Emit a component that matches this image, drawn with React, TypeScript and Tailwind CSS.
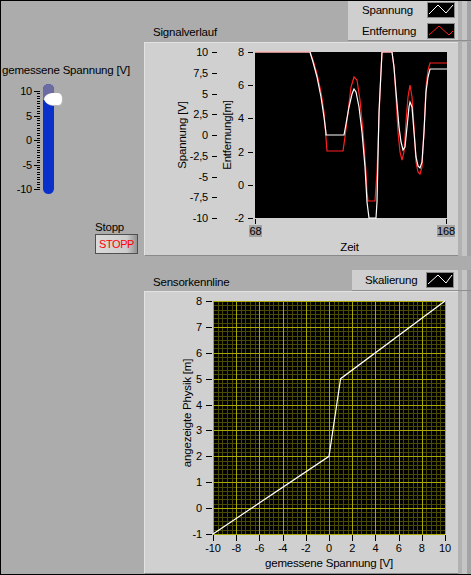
import React from 'react';

// Signalverlauf traces, local px inside the 192x166 plot
const whiteTrace = [
  [0, 0], [55, 0], [58, 10], [62, 25], [66, 45], [69, 65], [71, 81], [71, 83], [89, 83], [91, 72], [94, 55],
  [97, 42], [99, 37], [101, 40], [104, 55], [107, 80], [110, 115], [112, 150], [114, 166], [121, 166], [122, 150],
  [124, 60], [127, 0], [137, 0], [139, 15], [141, 40], [144, 75], [146, 90], [148, 98], [150, 95], [152, 75],
  [154, 55], [155, 50], [157, 55], [159, 80], [161, 105], [163, 114], [165, 116], [167, 110], [169, 80], [171, 40],
  [173, 25], [175, 17], [192, 17],
];
const redTrace = [
  [0, 0], [55, 0], [58, 8], [62, 22], [66, 40], [69, 60], [72, 99], [88, 99], [90, 85], [93, 60], [96, 35],
  [99, 25], [102, 28], [105, 48], [108, 80], [111, 120], [112, 140], [113, 149], [120, 149], [122, 120], [125, 40],
  [127, 0], [137, 0], [139, 15], [141, 45], [143, 80], [145, 100], [147, 108], [149, 100], [151, 70], [153, 45],
  [155, 33], [157, 45], [159, 75], [161, 110], [163, 120], [165, 122], [167, 115], [169, 80], [171, 35], [173, 18],
  [175, 11], [192, 11],
];
const kennlinie = [[-10, -1], [0, 2], [1, 5], [10, 8]];

const pts = (a: number[][]) => a.map((p) => p.join(',')).join(' ');

const Bevel = () => (
  <>
    <div className="w-[4px] bg-[#b1b1b1]" />
    <div className="w-[5px] bg-[#c5c5c5]" />
    <div className="w-[4px] bg-[#a3a3a3]" />
  </>
);

const Swatch = ({ line, color }: { line: string; color: string }) => (
  <svg width="28" height="16" className="block shrink-0">
    <rect x="0.5" y="0.5" width="27" height="15" fill="#000" stroke="#8a8a8a" />
    <polyline points={line} fill="none" stroke={color} strokeWidth="1" />
  </svg>
);

const Slider = () => {
  const yOf = (v: number) => 91 + (10 - v) * 4.9;
  const minor = Array.from({ length: 41 }, (_, i) => 10 - i * 0.5);
  return (
    <svg width="70" height="116" viewBox="1 82 70 116" className="block">
      {[10, 5, 0, -5, -10].map((v) => (
        <g key={v}>
          <text x="32" y={yOf(v) + 4} textAnchor="end" fontSize="11" fill="#000">
            {v}
          </text>
          <line x1="34" x2="40" y1={Math.round(yOf(v)) + 0.5} y2={Math.round(yOf(v)) + 0.5} stroke="#000" shapeRendering="crispEdges" />
        </g>
      ))}
      {minor.map((v) => (
        <line key={v} x1="37" x2="40" y1={Math.round(yOf(v)) + 0.5} y2={Math.round(yOf(v)) + 0.5} stroke="#000" shapeRendering="crispEdges" />
      ))}
      <rect x="43" y="84" width="11" height="110" rx="5.5" fill="#0a30cc" />
      <path d="M43,100 V89.5 A5.5,5.5 0 0 1 54,89.5 V100 Z" fill="#6c6ca2" />
      <path d="M45,100 Q46,95 53,94 L59,94 Q63,94 63,100 Q63,106 59,106 L53,106 Q46,105 45,100 Z" fill="#b8b8b8" />
      <path d="M44,99 Q45,94 52,93 L58,93 Q62,93 62,99 Q62,105 58,105 L52,105 Q45,104 44,99 Z" fill="#fff" />
    </svg>
  );
};

const SignalChart = () => {
  const y1 = (v: number) => 52 + ((10 - v) / 20) * 166;
  const y2 = (v: number) => 52 + ((8 - v) / 10) * 166;
  const axis1: [number, string][] = [
    [10, '10'], [7.5, '7,5'], [5, '5'], [2.5, '2,5'], [0, '0'], [-2.5, '-2,5'], [-5, '-5'], [-7.5, '-7,5'], [-10, '-10'],
  ];
  return (
    <svg width="313" height="212" viewBox="145 43 313 212" className="block">
      <rect x="255" y="52" width="192" height="166" fill="#000" />
      <g transform="translate(255,52)" fill="none" strokeWidth="1.2">
        <polyline points={pts(redTrace)} stroke="#ff2020" />
        <polyline points={pts(whiteTrace)} stroke="#fff" />
      </g>
      {axis1.map(([v, s]) => (
        <g key={s}>
          <text x="208" y={y1(v) + 4} textAnchor="end" fontSize="11" fill="#000">{s}</text>
          <line x1="212" x2="217" y1={Math.round(y1(v)) + 0.5} y2={Math.round(y1(v)) + 0.5} stroke="#000" shapeRendering="crispEdges" />
        </g>
      ))}
      {[8, 6, 4, 2, 0, -2].map((v) => (
        <g key={v}>
          <text x="244" y={y2(v) + 4} textAnchor="end" fontSize="11" fill="#000">{v}</text>
          <line x1="248" x2="253" y1={Math.round(y2(v)) + 0.5} y2={Math.round(y2(v)) + 0.5} stroke="#000" shapeRendering="crispEdges" />
        </g>
      ))}
      <line x1="255.5" x2="255.5" y1="219" y2="224" stroke="#000" shapeRendering="crispEdges" />
      <line x1="446.5" x2="446.5" y1="219" y2="224" stroke="#000" shapeRendering="crispEdges" />
      <rect x="249" y="225" width="13" height="12" fill="#a4a4a4" />
      <text x="255.5" y="235" textAnchor="middle" fontSize="11" fill="#000">68</text>
      <rect x="437" y="225" width="18" height="12" fill="#a4a4a4" />
      <text x="446" y="235" textAnchor="middle" fontSize="11" fill="#000">168</text>
      <text x="349.5" y="251" textAnchor="middle" fontSize="11.5" fill="#000">Zeit</text>
      <text x="182" y="135" transform="rotate(-90 182 135)" textAnchor="middle" dominantBaseline="central" fontSize="11.5" fill="#000">
        Spannung [V]
      </text>
      <text x="227" y="135" transform="rotate(-90 227 135)" textAnchor="middle" dominantBaseline="central" fontSize="11.5" fill="#000">
        Entfernung[m]
      </text>
    </svg>
  );
};

const KennlinieChart = () => {
  const xOf = (v: number) => 213 + (v + 10) * 11.6;
  const yOf = (w: number) => 301 + (8 - w) * (233 / 9);
  const minorX = Array.from({ length: 51 }, (_, i) => i).filter((i) => i % 5 !== 0);
  const minorY = Array.from({ length: 55 }, (_, i) => i).filter((i) => i % 6 !== 0);
  const xs = [-10, -8, -6, -4, -2, 0, 2, 4, 6, 8, 10];
  const ys = [8, 7, 6, 5, 4, 3, 2, 1, 0, -1];
  const c = (n: number) => Math.round(n) + 0.5;
  return (
    <svg width="313" height="281" viewBox="145 292 313 281" className="block">
      <rect x="213" y="301" width="232" height="233" fill="#000" />
      <g shapeRendering="crispEdges" strokeWidth="1">
        {minorX.map((i) => (
          <line key={'mx' + i} x1={c(213 + i * 4.64)} x2={c(213 + i * 4.64)} y1="301" y2="534" stroke="#4a4a00" />
        ))}
        {minorY.map((j) => (
          <line key={'my' + j} y1={c(301 + (j * 233) / 54)} y2={c(301 + (j * 233) / 54)} x1="213" x2="445" stroke="#4a4a00" />
        ))}
        {xs.map((v) => (
          <line key={'Mx' + v} x1={c(xOf(v))} x2={c(xOf(v))} y1="301" y2="534" stroke="#a8a800" />
        ))}
        {ys.map((w) => (
          <line key={'My' + w} y1={c(yOf(w))} y2={c(yOf(w))} x1="213" x2="445" stroke="#a8a800" />
        ))}
      </g>
      <polyline points={kennlinie.map(([v, w]) => `${xOf(v)},${yOf(w)}`).join(' ')} fill="none" stroke="#fff" strokeWidth="1.2" />
      {ys.map((w) => (
        <g key={'ly' + w}>
          <text x="202" y={yOf(w) + 4} textAnchor="end" fontSize="11" fill="#000">{w}</text>
          <line x1="206" x2="212" y1={c(yOf(w))} y2={c(yOf(w))} stroke="#000" shapeRendering="crispEdges" />
        </g>
      ))}
      {xs.map((v) => (
        <g key={'lx' + v}>
          <text x={xOf(v)} y="552" textAnchor="middle" fontSize="11" fill="#000">{v}</text>
          <line x1={c(xOf(v))} x2={c(xOf(v))} y1="535" y2="541" stroke="#000" shapeRendering="crispEdges" />
        </g>
      ))}
      <text x="329" y="567" textAnchor="middle" fontSize="11.5" fill="#000">gemessene Spannung [V]</text>
      <text x="186.5" y="413" transform="rotate(-90 186.5 413)" textAnchor="middle" dominantBaseline="central" fontSize="11.5" fill="#000">
        angezeigte Physik [m]
      </text>
    </svg>
  );
};

export default function App() {
  return (
    <div className="w-[471px] h-[575px] bg-[#acacac] border-t border-l border-b border-black flex font-['Liberation_Sans',Arial,sans-serif] text-[11.5px] leading-[13px] tracking-[-0.2px] text-black overflow-hidden">
      {/* left column: slider + stop button */}
      <div className="w-[143px] flex flex-col pt-[63px]">
        <div className="pl-[1px] whitespace-nowrap">gemessene Spannung [V]</div>
        <div className="mt-[5px]">
          <Slider />
        </div>
        <div className="ml-[94px] mt-[23px]">Stopp</div>
        <button className="ml-[94px] w-[43px] h-[20px] border border-[#505050] bg-gradient-to-r from-[#dadada] via-[#cdcdcd] via-75% to-[#929292] text-[#ff0000] text-[11px] tracking-[-0.4px] flex items-center justify-center">
          STOPP
        </button>
      </div>

      {/* right column: charts */}
      <div className="w-[327px] flex flex-col">
        <div className="h-[41px] flex justify-between items-start">
          <div className="self-end pb-[3px] pl-[9px]">Signalverlauf</div>
          <div className="w-[123px] h-[40px] flex border-b border-[#8e8e8e]">
            <div className="w-[110px] bg-[#cfcfcf] flex flex-col pt-[1px] gap-[5px]">
              <div className="flex items-center h-[16px]">
                <span className="ml-[14px]">Spannung</span>
                <span className="ml-auto mr-[3px]">
                  <Swatch line="2,12 11,3 19,11 26,3" color="#fff" />
                </span>
              </div>
              <div className="flex items-center h-[16px]">
                <span className="ml-[14px]">Entfernung</span>
                <span className="ml-auto mr-[3px]">
                  <Swatch line="2,12 12,3 22,12 26,8" color="#ff2020" />
                </span>
              </div>
            </div>
            <Bevel />
          </div>
        </div>

        <div className="h-[214px] flex">
          <div className="w-[314px] bg-[#d0d0d0] border-t border-l border-b border-t-[#e2e2e2] border-l-[#e2e2e2] border-b-[#8a8a8a]">
            <SignalChart />
          </div>
          <Bevel />
        </div>

        <div className="h-[35px] flex justify-between items-end">
          <div className="pb-[2px] pl-[9px]">Sensorkennline</div>
          <div className="w-[119px] h-[21px] flex border-b border-[#8e8e8e]">
            <div className="w-[106px] bg-[#cfcfcf] flex items-start pt-[2px]">
              <span className="ml-[13px] mt-[2px]">Skalierung</span>
              <span className="ml-auto mr-[4px]">
                <Swatch line="2,12 12,3 20,11 26,3" color="#fff" />
              </span>
            </div>
            <Bevel />
          </div>
        </div>

        <div className="h-[283px] flex">
          <div className="w-[314px] bg-[#d0d0d0] border-t border-l border-b border-t-[#e2e2e2] border-l-[#e2e2e2] border-b-[#8a8a8a]">
            <KennlinieChart />
          </div>
          <Bevel />
        </div>
      </div>
    </div>
  );
}
